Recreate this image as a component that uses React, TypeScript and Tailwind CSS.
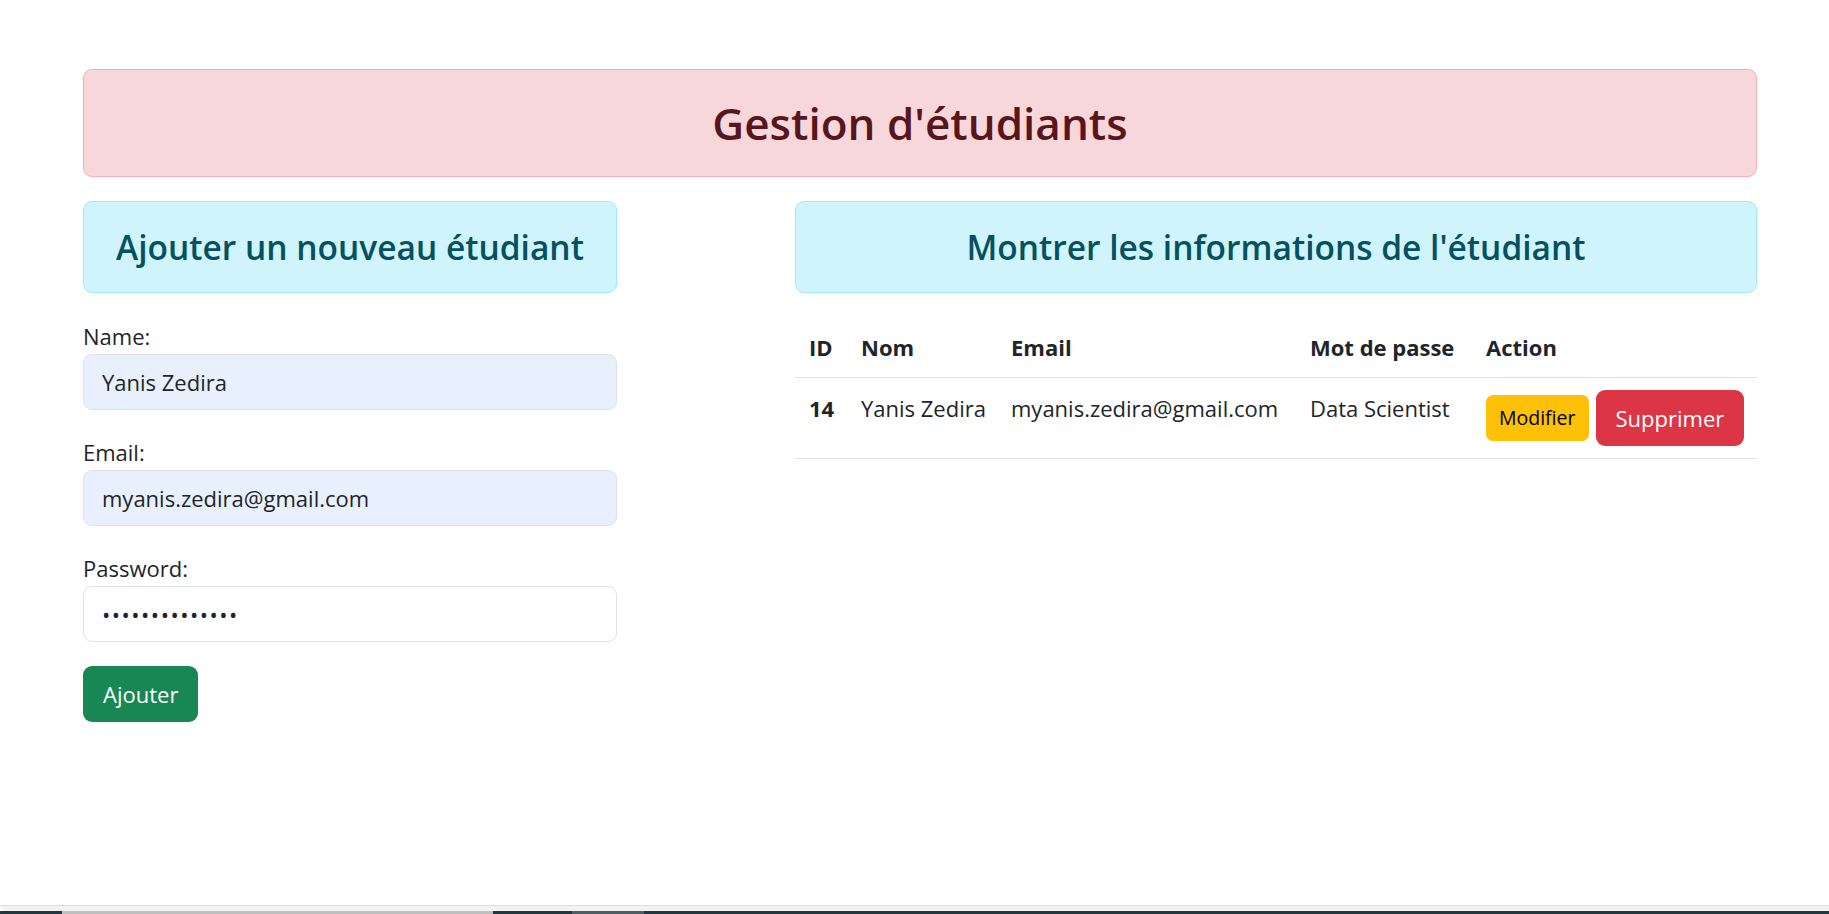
import React from "react";

const students = [
	{
		id: 14,
		nom: "Yanis Zedira",
		email: "myanis.zedira@gmail.com",
		motDePasse: "Data Scientist",
	},
];

export default function App() {
	return (
		<div className="min-h-[914px] flex flex-col bg-white font-['Open_Sans',sans-serif] text-[#212529]">
			<div className="flex-1 pl-[83px] pr-[72px] pt-[69px]">
				<div className="border border-[#f1aeb5] bg-[#f8d7da] rounded-[9px] py-6 text-center">
					<h1 className="text-[44px] leading-[58px] font-semibold text-[#58151c]">
						Gestion d'étudiants
					</h1>
				</div>

				<div className="flex justify-between mt-6">
					{/* formulaire */}
					<div className="w-[534px]">
						<div className="h-[92px] flex items-center justify-center border border-[#9eeaf9] bg-[#cff4fc] rounded-[9px]">
							<h2 className="text-[33.5px] font-semibold text-[#055160]">
								Ajouter un nouveau étudiant
							</h2>
						</div>

						<form className="mt-[25px]">
							<div className="mb-[24px]">
								<label
									htmlFor="name"
									className="block text-[22px] leading-[36px]"
								>
									Name:
								</label>
								<input
									id="name"
									type="text"
									defaultValue="Yanis Zedira"
									className="block w-full h-[56px] px-[18px] border border-[#dee2e6] rounded-[9px] bg-[#e8f0fe] text-[22px] text-[#212529] outline-none"
								/>
							</div>
							<div className="mb-[24px]">
								<label
									htmlFor="email"
									className="block text-[22px] leading-[36px]"
								>
									Email:
								</label>
								<input
									id="email"
									type="email"
									defaultValue="myanis.zedira@gmail.com"
									className="block w-full h-[56px] px-[18px] border border-[#dee2e6] rounded-[9px] bg-[#e8f0fe] text-[22px] text-[#212529] outline-none"
								/>
							</div>
							<div className="mb-[24px]">
								<label
									htmlFor="password"
									className="block text-[22px] leading-[36px]"
								>
									Password:
								</label>
								<input
									id="password"
									type="password"
									defaultValue="abcdefghijklmn"
									className="block w-full h-[56px] px-[18px] border border-[#dee2e6] rounded-[9px] bg-white text-[22px] tracking-[1.5px] text-[#212529] outline-none"
								/>
							</div>
							<button
								type="button"
								className="h-[56px] px-[20px] rounded-[9px] bg-[#198754] text-white text-[22px]"
							>
								Ajouter
							</button>
						</form>
					</div>

					{/* liste */}
					<div className="w-[962px]">
						<div className="h-[92px] flex items-center justify-center border border-[#9eeaf9] bg-[#cff4fc] rounded-[9px]">
							<h2 className="text-[33.5px] font-semibold text-[#055160]">
								Montrer les informations de l'étudiant
							</h2>
						</div>

						<table className="mt-6 w-full table-fixed border-collapse text-[22px] leading-[36px]">
							<colgroup>
								<col className="w-[52px]" />
								<col className="w-[150px]" />
								<col className="w-[301px]" />
								<col className="w-[174px]" />
								<col />
							</colgroup>
							<thead>
								<tr>
									<th className="py-3 px-[14px] text-left font-bold whitespace-nowrap border-b border-[#dee2e6]">
										ID
									</th>
									<th className="py-3 px-[14px] text-left font-bold whitespace-nowrap border-b border-[#dee2e6]">
										Nom
									</th>
									<th className="py-3 px-[14px] text-left font-bold whitespace-nowrap border-b border-[#dee2e6]">
										Email
									</th>
									<th className="py-3 px-[12px] text-left font-bold whitespace-nowrap border-b border-[#dee2e6]">
										Mot de passe
									</th>
									<th className="py-3 px-[14px] text-left font-bold whitespace-nowrap border-b border-[#dee2e6]">
										Action
									</th>
								</tr>
							</thead>
							<tbody>
								{students.map((s) => (
									<tr key={s.id}>
										<th className="py-3 px-[14px] text-left align-top font-bold border-b border-[#dee2e6]">
											{s.id}
										</th>
										<td className="py-3 px-[14px] align-top whitespace-nowrap border-b border-[#dee2e6]">
											{s.nom}
										</td>
										<td className="py-3 px-[14px] align-top whitespace-nowrap border-b border-[#dee2e6]">
											{s.email}
										</td>
										<td className="py-3 px-[12px] align-top whitespace-nowrap border-b border-[#dee2e6]">
											{s.motDePasse}
										</td>
										<td className="py-3 px-[14px] align-top border-b border-[#dee2e6]">
											<div className="flex items-center gap-[7px]">
												<button className="h-[46px] px-[13px] rounded-[7px] bg-[#ffc107] text-black text-[19.5px] leading-[30px]">
													Modifier
												</button>
												<button className="h-[56px] px-[20px] rounded-[9px] bg-[#dc3545] text-white text-[22px]">
													Supprimer
												</button>
											</div>
										</td>
									</tr>
								))}
							</tbody>
						</table>
					</div>
				</div>
			</div>

			{/* bas de fenêtre */}
			<div className="h-[6px] bg-[#f3f3f3] border-t border-[#dcdcdc] rounded-bl-[6px]" />
			<div className="h-[3px] flex bg-[#203940]">
				<div className="w-[62px]" />
				<div className="w-[431px] bg-[#c0c0c0]" />
				<div className="w-[79px]" />
				<div className="w-[72px] bg-[#4c5f63]" />
			</div>
		</div>
	);
}
